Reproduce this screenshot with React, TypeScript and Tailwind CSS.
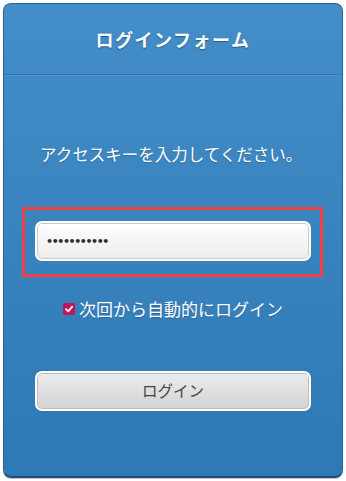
import React from "react";

export default function App() {
  const jp = { fontFamily: '"Noto Sans CJK JP", "Noto Sans", sans-serif' };
  return (
    <div className="w-[346px] h-[481px] bg-white pt-[3px] pl-[3px]" style={jp}>
      <div className="w-[340px] h-[475px] rounded-[8px] border border-[#28649a] border-b-[2px] border-b-[#1d4d78] bg-gradient-to-b from-[#438dc8] to-[#2e79b4] flex flex-col overflow-hidden shadow-[0_1px_1px_rgba(0,0,0,0.25)]">
        <div className="h-[71px] shrink-0 flex items-center justify-center border-b border-b-[#3274ab] shadow-[0_1px_0_rgba(255,255,255,0.08)]">
          <span className="text-white font-bold text-[18px] tracking-[1.5px] mt-[1px] [text-shadow:0_1px_1px_rgba(0,0,0,0.35)]">
            ログインフォーム
          </span>
        </div>
        <div className="flex flex-col">
          <div className="mt-[67px] h-[24px] leading-[24px] text-white text-[16.5px] pl-[36px] [text-shadow:0_1px_1px_rgba(0,0,0,0.2)]">
            アクセスキーを入力してください。
          </div>
          <div className="mt-[41px] ml-[18px] w-[301px] border-[3px] border-[#f34040] pt-[11px] pb-[13px] pl-[10px] pr-[9px]">
            <div className="h-[40px] w-[276px] rounded-[7px] border-2 border-white bg-gradient-to-b from-[#ffffff] to-[#ececec] shadow-[inset_0_0_0_1px_#c8c8c8] flex items-center pl-[9px]">
              <span className="text-[#2a2a2a] text-[11px] tracking-[-1.4px] leading-none font-bold" style={{ fontFamily: '"DejaVu Sans", sans-serif' }}>•••••••••••</span>
            </div>
          </div>
          <div className="mt-[20px] h-[24px] flex items-center justify-center gap-[4px] text-white text-[17px] [text-shadow:0_1px_1px_rgba(0,0,0,0.2)]">
            <span className="w-[12px] h-[12px] rounded-[2px] bg-[#c5145a] flex items-center justify-center">
              <svg width="10" height="10" viewBox="0 0 10 10">
                <path d="M2 5.2 L4.2 7.4 L8.2 2.6" stroke="white" strokeWidth="1.8" fill="none" strokeLinecap="round" strokeLinejoin="round" />
              </svg>
            </span>
            <span>次回から自動的にログイン</span>
          </div>
          <div className="mt-[50px] ml-[31px] h-[40px] w-[276px] rounded-[7px] border-2 border-white bg-gradient-to-b from-[#ececec] to-[#d3d3d3] shadow-[inset_0_0_0_1px_#bdbdbd] flex items-center justify-center">
            <span className="text-[#444] text-[15.5px]">ログイン</span>
          </div>
        </div>
      </div>
    </div>
  );
}
